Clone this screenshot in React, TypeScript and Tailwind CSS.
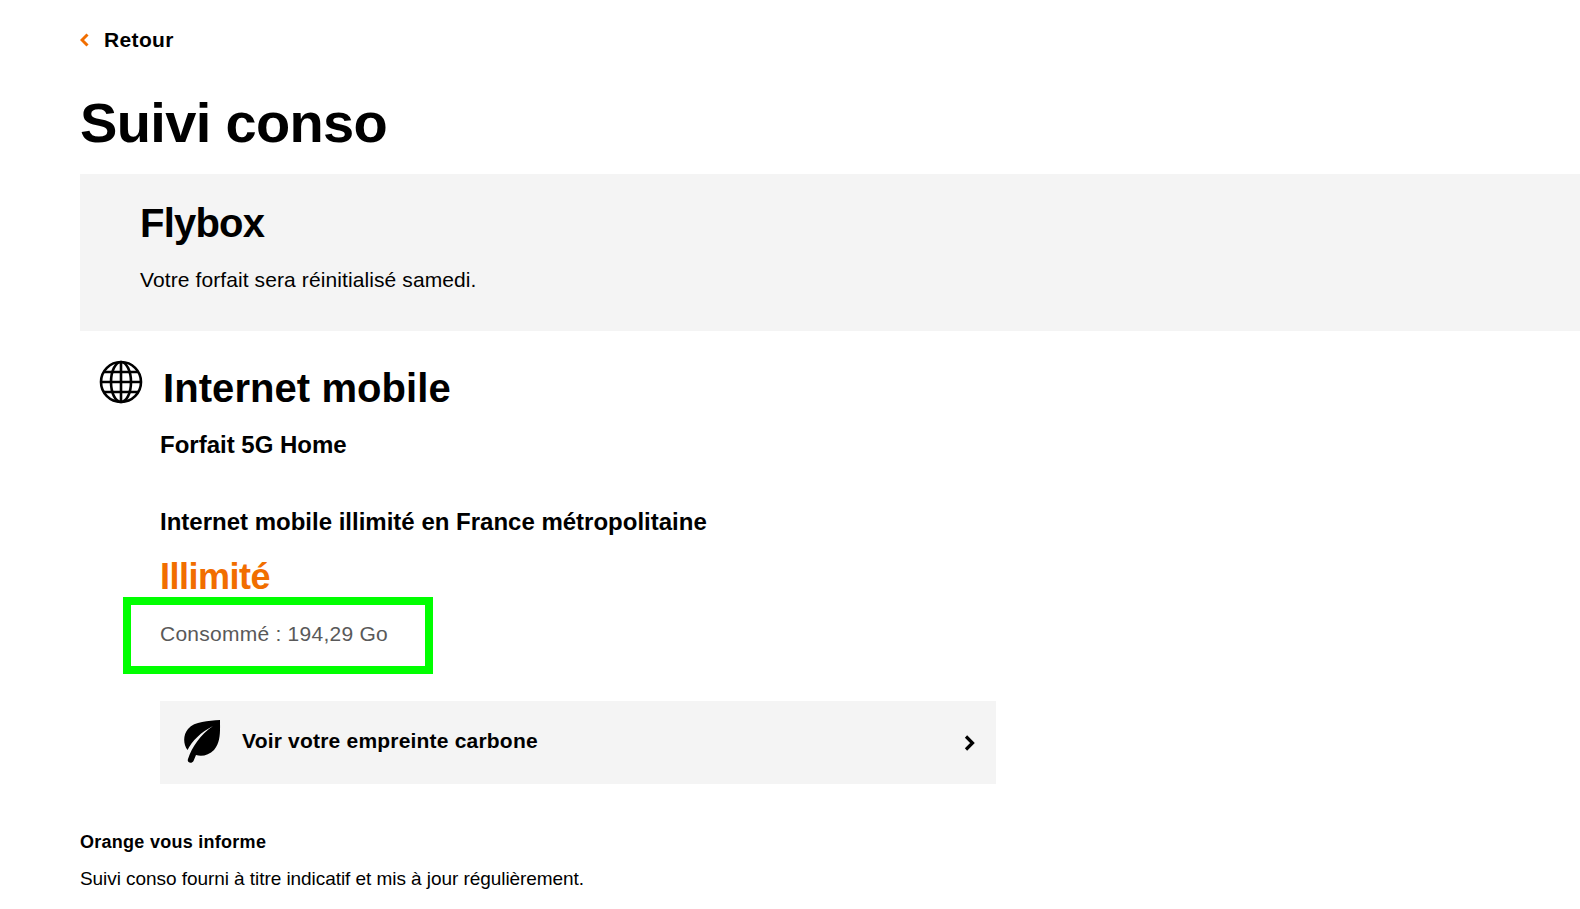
function ChevronLeft() {
  return (
    <svg width="10" height="14" viewBox="0 0 10 14" className="text-[#f16e00]">
      <path d="M7.5 1.5 L2 7 L7.5 12.5" fill="none" stroke="currentColor" strokeWidth="3" />
    </svg>
  );
}

function Globe() {
  return (
    <svg width="44" height="44" viewBox="0 0 44 44" fill="none" stroke="#000" strokeWidth="2.6">
      <circle cx="22" cy="22" r="20" />
      <ellipse cx="22" cy="22" rx="10" ry="20" />
      <path d="M22 2 V42 M2 22 H42 M5 12 H39 M5 32 H39" />
    </svg>
  );
}

function Leaf() {
  return (
    <svg width="38" height="44" viewBox="0 0 38 44" className="mb-[3px]">
      <path
        d="M37 1 C37 12 38 23 31 31 C26 36 19 38 13 36 L10.5 42 C9 45 3.5 44 5 40 C9 28 17 16 30 7 C18 13 9 22 4.5 31 C0 25 0 16 5 10 C12 2 25 2 37 1 Z"
        fill="#000"
      />
    </svg>
  );
}

function ChevronRight() {
  return (
    <svg width="12" height="16" viewBox="0 0 12 16">
      <path d="M2 1.5 L8.5 8 L2 14.5" fill="none" stroke="#000" strokeWidth="3.2" />
    </svg>
  );
}

export default function App() {
  return (
    <div className="min-h-[909px] overflow-hidden bg-white pl-20 font-['Liberation_Sans',Arial,sans-serif] text-black">
      <div className="flex h-[80px] items-center gap-[14px]">
        <ChevronLeft />
        <a className="text-[21px] font-bold tracking-[0.35px]">Retour</a>
      </div>
      <h1 className="h-[94px] pt-[3px] text-[56px] font-bold leading-[80px] tracking-[-0.65px]">Suivi conso</h1>

      <section className="h-[157px] bg-[#f4f4f4] pl-[60px] pt-[24px]">
        <h2 className="text-[40px] font-bold leading-[50px] tracking-[-0.8px]">Flybox</h2>
        <p className="mt-[17px] text-[21px] leading-[30px] tracking-[0.1px]">Votre forfait sera réinitialisé samedi.</p>
      </section>

      <div className="flex h-[99px] pl-[19px] pt-[29px]">
        <Globe />
        <h2 className="ml-5 mt-[3px] text-[40px] font-bold leading-[50px] tracking-[0.07px]">Internet mobile</h2>
      </div>

      <div className="pl-20">
        <p className="text-[24px] font-bold leading-[30px]">Forfait 5G Home</p>
        <p className="mt-[47px] text-[24px] font-bold leading-[30px]">
          Internet mobile illimité en France métropolitaine
        </p>
        <p className="mt-[20px] text-[36px] font-bold leading-[40px] tracking-[-0.5px] text-[#f16e00]">Illimité</p>

        <div className="-ml-[37px] flex h-[77px] w-[310px] items-center border-8 border-[#00ff00] pb-[3px] pl-[29px]">
          <span className="text-[21px] tracking-[0.25px] text-[#595959]">Consommé : 194,29 Go</span>
        </div>

        <a className="mt-[27px] flex h-[83px] w-[836px] items-center bg-[#f4f4f4] pl-[23px] pr-[20px]">
          <Leaf />
          <span className="mb-[3px] ml-[21px] flex-1 text-[21px] font-bold tracking-[0.2px]">Voir votre empreinte carbone</span>
          <ChevronRight />
        </a>
      </div>

      <p className="mt-[46px] text-[18px] font-bold leading-[24px] tracking-[0.27px]">Orange vous informe</p>
      <p className="mt-[12px] text-[19px] leading-[26px] tracking-[-0.06px]">
        Suivi conso fourni à titre indicatif et mis à jour régulièrement.
      </p>
    </div>
  );
}
